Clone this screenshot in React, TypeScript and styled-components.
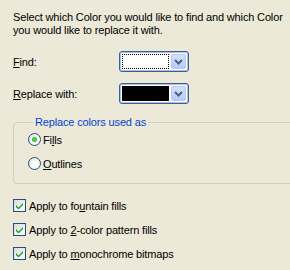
import styled, { createGlobalStyle } from "styled-components";

const Global = createGlobalStyle`
  html, body {
    margin: 0;
    background: #ece9d8;
  }
  body {
    font-family: "Liberation Sans", Arial, sans-serif;
    font-size: 11px;
    letter-spacing: -0.15px;
    color: #000;
  }
`;

const Page = styled.div`
  width: 290px;
  height: 270px;
  overflow: hidden;
  padding: 11px 0 0 13px;
  box-sizing: border-box;
`;

const Intro = styled.p`
  margin: 0;
  line-height: 13px;
  white-space: nowrap;
`;

const Fields = styled.div`
  display: grid;
  grid-template-columns: 106px 70px;
  row-gap: 11px;
  align-items: center;
  margin-top: 14px;
`;

const Key = styled.span`
  text-decoration: underline;
`;

const Combo = styled.div`
  height: 21px;
  box-sizing: border-box;
  border: 1px solid #3d5f95;
  border-radius: 3px;
  box-shadow: inset 0 0 0 1px #a9c0e8;
  background: #fff;
  display: flex;
  align-items: center;
  padding: 2px;
  gap: 2px;
`;

const Swatch = styled.div<{ $color: string; $focus?: boolean }>`
  flex: 1;
  height: 15px;
  background: ${p => p.$color};
  outline: ${p => (p.$focus ? "1px dotted #000" : "none")};
  outline-offset: -1px;
`;

const Arrow = styled.div`
  width: 15px;
  height: 15px;
  border-radius: 2px;
  background: linear-gradient(#d4e1fd, #b7cbf6);
  border: 1px solid #b6c9f2;
  box-sizing: border-box;
  display: flex;
  align-items: center;
  justify-content: center;
`;

const Group = styled.fieldset`
  margin: 12px -20px 0 0;
  padding: 5px 0 2px 14px;
  border: 1px solid #d0d0bf;
  border-radius: 4px;
  min-width: 0;
`;

const Legend = styled.legend`
  color: #0046d5;
  padding: 0 2px;
  margin-left: 5px;
`;

const Choice = styled.label`
  display: flex;
  align-items: center;
  gap: 2px;
  height: 13px;
  margin-bottom: 11px;
`;

const Radio = styled.span<{ $on?: boolean }>`
  width: 13px;
  height: 13px;
  flex: none;
  box-sizing: border-box;
  border-radius: 50%;
  border: 1px solid #1c5180;
  background: radial-gradient(circle at 60% 60%, #fff 30%, #dcdcd4 100%);
  display: flex;
  align-items: center;
  justify-content: center;
  &::after {
    content: "";
    width: 5px;
    height: 5px;
    border-radius: 50%;
    background: ${p => (p.$on ? "radial-gradient(circle, #5ee35e, #1c9c1c)" : "transparent")};
  }
`;

const Checks = styled.div`
  display: flex;
  flex-direction: column;
  gap: 11px;
  margin-top: 15px;
`;

const Check = styled.label`
  display: flex;
  align-items: center;
  gap: 3px;
  height: 13px;
`;

const Box = styled.span`
  width: 13px;
  height: 13px;
  flex: none;
  box-sizing: border-box;
  border: 1px solid #1c5180;
  background: linear-gradient(135deg, #dcdcd7, #fff);
  display: flex;
  align-items: center;
  justify-content: center;
`;

const Tick = () => (
  <svg width="7" height="7" viewBox="0 0 7 7">
    <path d="M0 3 L2.5 5.5 L7 1 L7 3 L2.5 7.5 L0 5 Z" fill="#21a121" />
  </svg>
);

const Chevron = () => (
  <svg width="9" height="6" viewBox="0 0 9 6">
    <path d="M1 1 L4.5 4.5 L8 1" stroke="#4d6185" strokeWidth="2" fill="none" />
  </svg>
);

export default function App() {
  return (
    <Page>
      <Global />
      <Intro>
        Select which Color you would like to find and which Color
        <br />
        you would like to replace it with.
      </Intro>
      <Fields>
        <span><Key>F</Key>ind:</span>
        <Combo>
          <Swatch $color="#fff" $focus />
          <Arrow><Chevron /></Arrow>
        </Combo>
        <span><Key>R</Key>eplace with:</span>
        <Combo>
          <Swatch $color="#000" />
          <Arrow><Chevron /></Arrow>
        </Combo>
      </Fields>
      <Group>
        <Legend>Replace colors used as</Legend>
        <Choice><Radio $on /><span>Fi<Key>l</Key>ls</span></Choice>
        <Choice><Radio /><span><Key>O</Key>utlines</span></Choice>
      </Group>
      <Checks>
        <Check><Box><Tick /></Box><span>Apply to fo<Key>u</Key>ntain fills</span></Check>
        <Check><Box><Tick /></Box><span>Apply to <Key>2</Key>-color pattern fills</span></Check>
        <Check><Box><Tick /></Box><span>Apply to <Key>m</Key>onochrome bitmaps</span></Check>
      </Checks>
    </Page>
  );
}
